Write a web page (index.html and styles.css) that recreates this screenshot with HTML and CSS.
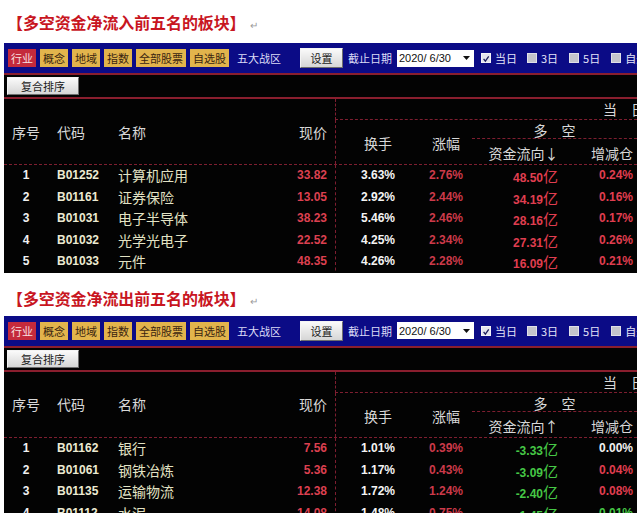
FILE: index.html
```html
<!DOCTYPE html>
<html lang="zh-CN">
<head>
<meta charset="utf-8">
<title>多空资金净流向板块</title>
<link rel="stylesheet" href="styles.css">
</head>
<body>
<section class="block block-in">
  <h2 class="title">【多空资金净流入前五名的板块】<span class="ret">↵</span></h2>
  <div class="panel">
    <div class="toolbar">
      <span class="tab tab-active">行业</span>
      <span class="tab">概念</span>
      <span class="tab">地域</span>
      <span class="tab">指数</span>
      <span class="tab">全部股票</span>
      <span class="tab">自选股</span>
      <span class="zone">五大战区</span>
      <span class="btn btn-set">设置</span>
      <span class="label">截止日期</span>
      <span class="select"><span class="sel-text">2020/ 6/30</span><svg class="sel-arrow" width="7" height="4" viewBox="0 0 7 4"><path d="M0 0H7L3.5 4Z" fill="#111"/></svg></span>
      <span class="chk chk-1"><span class="box box-on"><svg width="10" height="10" viewBox="0 0 10 10"><path d="M2 4.8L4.2 7.6L8.4 1.6" fill="none" stroke="#1c1c5c" stroke-width="1.6"/></svg></span>当日</span>
      <span class="chk chk-2"><span class="box"></span>3日</span>
      <span class="chk chk-3"><span class="box"></span>5日</span>
      <span class="chk chk-4"><span class="box"></span>自选</span>
    </div>
    <div class="sortbar"><span class="btn btn-sort">复合排序</span></div>
    <div class="cols head">
      <span class="h-no">序号</span>
      <span class="h-code">代码</span>
      <span class="h-name">名称</span>
      <span class="h-price">现价</span>
      <span class="h-cur">当　日</span>
      <span class="h-turn">换手</span>
      <span class="h-chg">涨幅</span>
      <span class="h-ls">多　空</span>
      <span class="h-flow">资金流向↓</span>
      <span class="h-pos">增减仓</span>
    </div>
    <div class="rows">
      <div class="cols row"><span class="c-no">1</span><span class="c-code">B01252</span><span class="c-name">计算机应用</span><span class="c-price">33.82</span><span class="c-turn">3.63%</span><span class="c-chg">2.76%</span><span class="c-flow up">48.50<span class="yi">亿</span></span><span class="c-pos up">0.24%</span></div>
      <div class="cols row"><span class="c-no">2</span><span class="c-code">B01161</span><span class="c-name">证券保险</span><span class="c-price">13.05</span><span class="c-turn">2.92%</span><span class="c-chg">2.44%</span><span class="c-flow up">34.19<span class="yi">亿</span></span><span class="c-pos up">0.16%</span></div>
      <div class="cols row"><span class="c-no">3</span><span class="c-code">B01031</span><span class="c-name">电子半导体</span><span class="c-price">38.23</span><span class="c-turn">5.46%</span><span class="c-chg">2.46%</span><span class="c-flow up">28.16<span class="yi">亿</span></span><span class="c-pos up">0.17%</span></div>
      <div class="cols row"><span class="c-no">4</span><span class="c-code">B01032</span><span class="c-name">光学光电子</span><span class="c-price">22.52</span><span class="c-turn">4.25%</span><span class="c-chg">2.34%</span><span class="c-flow up">27.31<span class="yi">亿</span></span><span class="c-pos up">0.26%</span></div>
      <div class="cols row"><span class="c-no">5</span><span class="c-code">B01033</span><span class="c-name">元件</span><span class="c-price">48.35</span><span class="c-turn">4.26%</span><span class="c-chg">2.28%</span><span class="c-flow up">16.09<span class="yi">亿</span></span><span class="c-pos up">0.21%</span></div>
    </div>
  </div>
</section>

<section class="block block-out">
  <h2 class="title">【多空资金净流出前五名的板块】<span class="ret">↵</span></h2>
  <div class="panel">
    <div class="toolbar">
      <span class="tab tab-active">行业</span>
      <span class="tab">概念</span>
      <span class="tab">地域</span>
      <span class="tab">指数</span>
      <span class="tab">全部股票</span>
      <span class="tab">自选股</span>
      <span class="zone">五大战区</span>
      <span class="btn btn-set">设置</span>
      <span class="label">截止日期</span>
      <span class="select"><span class="sel-text">2020/ 6/30</span><svg class="sel-arrow" width="7" height="4" viewBox="0 0 7 4"><path d="M0 0H7L3.5 4Z" fill="#111"/></svg></span>
      <span class="chk chk-1"><span class="box box-on"><svg width="10" height="10" viewBox="0 0 10 10"><path d="M2 4.8L4.2 7.6L8.4 1.6" fill="none" stroke="#1c1c5c" stroke-width="1.6"/></svg></span>当日</span>
      <span class="chk chk-2"><span class="box"></span>3日</span>
      <span class="chk chk-3"><span class="box"></span>5日</span>
      <span class="chk chk-4"><span class="box"></span>自选</span>
    </div>
    <div class="sortbar"><span class="btn btn-sort">复合排序</span></div>
    <div class="cols head">
      <span class="h-no">序号</span>
      <span class="h-code">代码</span>
      <span class="h-name">名称</span>
      <span class="h-price">现价</span>
      <span class="h-cur">当　日</span>
      <span class="h-turn">换手</span>
      <span class="h-chg">涨幅</span>
      <span class="h-ls">多　空</span>
      <span class="h-flow">资金流向↑</span>
      <span class="h-pos">增减仓</span>
    </div>
    <div class="rows">
      <div class="cols row"><span class="c-no">1</span><span class="c-code">B01162</span><span class="c-name">银行</span><span class="c-price">7.56</span><span class="c-turn">1.01%</span><span class="c-chg">0.39%</span><span class="c-flow down">-3.33<span class="yi">亿</span></span><span class="c-pos flat">0.00%</span></div>
      <div class="cols row"><span class="c-no">2</span><span class="c-code">B01061</span><span class="c-name">钢铁冶炼</span><span class="c-price">5.36</span><span class="c-turn">1.17%</span><span class="c-chg">0.43%</span><span class="c-flow down">-3.09<span class="yi">亿</span></span><span class="c-pos up">0.04%</span></div>
      <div class="cols row"><span class="c-no">3</span><span class="c-code">B01135</span><span class="c-name">运输物流</span><span class="c-price">12.38</span><span class="c-turn">1.72%</span><span class="c-chg">1.24%</span><span class="c-flow down">-2.40<span class="yi">亿</span></span><span class="c-pos up">0.08%</span></div>
      <div class="cols row"><span class="c-no">4</span><span class="c-code">B01112</span><span class="c-name">水泥</span><span class="c-price">14.08</span><span class="c-turn">1.48%</span><span class="c-chg">0.75%</span><span class="c-flow down">-1.45<span class="yi">亿</span></span><span class="c-pos down">0.01%</span></div>
    </div>
  </div>
</section>
</body>
</html>
```

FILE: styles.css
```css
html, body {
  margin: 0;
  padding: 0;
  background: #ffffff;
}

body {
  width: 640px;
  height: 513px;
  overflow: hidden;
  font-family: "Noto Sans CJK SC", "Liberation Sans", sans-serif;
}

.block {
  display: flex;
  flex-direction: column;
}

.title {
  margin: 0;
  height: 43px;
  box-sizing: border-box;
  padding: 12px 0 0 7px;
  font-size: 16px;
  line-height: 20px;
  font-weight: 700;
  letter-spacing: -0.1px;
  color: #c8161f;
  white-space: nowrap;
}

.block-out .title {
  padding-top: 15px;
}

.ret {
  margin-left: 4px;
  font-size: 10px;
  font-weight: 400;
  color: #9a9a9a;
  letter-spacing: 0;
}

.panel {
  margin-left: 4px;
  width: 633px;
  background: #030303;
  overflow: hidden;
}

/* toolbar */
.toolbar {
  height: 30px;
  box-sizing: border-box;
  padding-left: 4px;
  background: #0b0b86;
  display: flex;
  align-items: center;
  gap: 4px;
  font-size: 11px;
  white-space: nowrap;
}

.toolbar > * {
  flex-shrink: 0;
}

.tab {
  height: 18px;
  line-height: 18px;
  padding: 0 3px;
  background: #e2b44c;
  color: #3a2410;
}

.tab-active {
  background: #c42a3c;
  color: #f8e0e0;
}

.zone {
  margin-left: 4px;
  color: #dcdcf6;
}

.btn {
  box-sizing: border-box;
  text-align: center;
  color: #1a1a1a;
  background: linear-gradient(#fafafa, #d6d6d6);
  border: 1px solid;
  border-color: #f4f4f4 #6e6e6e #6e6e6e #f4f4f4;
}

.btn-set {
  width: 43px;
  height: 20px;
  line-height: 18px;
  margin-left: 15px;
}

.label {
  margin-left: 1px;
  color: #dcdcf6;
}

.select {
  margin-left: 1px;
  width: 77px;
  height: 17px;
  background: #ffffff;
  display: flex;
  align-items: center;
  padding: 0 4px 0 2px;
  box-sizing: border-box;
}

.sel-text {
  font-family: "Liberation Sans", sans-serif;
  font-size: 11px;
  color: #111111;
  white-space: pre;
}

.sel-arrow {
  margin-left: auto;
}

.chk {
  display: flex;
  align-items: center;
  gap: 4px;
  color: #e4e4f8;
}

.chk-1 { margin-left: 3px; }
.chk-2 { margin-left: 6px; }
.chk-3 { margin-left: 7px; }
.chk-4 { margin-left: 7px; }

.box {
  width: 10px;
  height: 10px;
  box-sizing: border-box;
  background: #c4c4cc;
  border: 1px solid #e0e0e8;
  display: flex;
}

.box-on {
  background: #e4e4ec;
  border-color: #f4f4f8;
}

/* sort bar */
.sortbar {
  height: 26px;
  box-sizing: border-box;
  border-top: 2px solid #8a1e2e;
  border-bottom: 2px solid #8a1e2e;
  display: flex;
  align-items: center;
  padding-left: 3px;
}

.btn-sort {
  width: 72px;
  height: 18px;
  line-height: 16px;
  font-size: 11px;
}

/* table grid */
.cols {
  display: grid;
  grid-template-columns: 44px 66px 140px 81px 85px 52px 103px 62px;
}

.head {
  grid-template-rows: 21px 19px 25px;
  border-bottom: 1px dashed #7e1e30;
  color: #d8d8d8;
  font-size: 14px;
  white-space: nowrap;
}

.h-no, .h-code, .h-name, .h-price {
  grid-row: 1 / 4;
  align-self: center;
  line-height: 20px;
}

.h-no { grid-column: 1; text-align: center; }
.h-code { grid-column: 2; padding-left: 9px; }
.h-name { grid-column: 3; padding-left: 4px; }
.h-price { grid-column: 4; text-align: right; padding-right: 8px; }

.h-cur {
  grid-column: 5 / 9;
  grid-row: 1;
  border-left: 1px dashed #7e1e30;
  border-bottom: 1px dashed #7e1e30;
  line-height: 20px;
  padding-left: 267px;
}

.h-turn {
  grid-column: 5;
  grid-row: 2 / 4;
  border-left: 1px dashed #7e1e30;
  display: flex;
  align-items: center;
  justify-content: center;
  padding-top: 2px;
}

.h-chg {
  grid-column: 6;
  grid-row: 2 / 4;
  display: flex;
  align-items: center;
  justify-content: center;
  padding-top: 2px;
}

.h-ls {
  grid-column: 7 / 9;
  grid-row: 2;
  border-bottom: 1px dashed #7e1e30;
  text-align: center;
  line-height: 18px;
  padding-top: 1px;
}

.h-flow {
  grid-column: 7;
  grid-row: 3;
  text-align: center;
  line-height: 22px;
  padding-top: 3px;
}

.h-pos {
  grid-column: 8;
  grid-row: 3;
  text-align: right;
  padding-right: 4px;
  line-height: 22px;
  padding-top: 3px;
}

/* rows */
.row {
  height: 21.6px;
  font-family: "Liberation Sans", sans-serif;
  font-weight: 700;
  font-size: 12px;
  white-space: nowrap;
}

.row > span {
  line-height: 21.6px;
}

.c-no { text-align: center; color: #f0f0f0; }
.c-code { padding-left: 9px; color: #ecead2; }
.c-name {
  padding-left: 4px;
  font-family: "Noto Sans CJK SC", sans-serif;
  font-weight: 400;
  font-size: 14px;
  color: #e2e2c4;
}
.c-price { text-align: right; padding-right: 8px; color: #dc4050; }
.c-turn { border-left: 1px dashed #7e1e30; text-align: center; color: #f4f4f4; }
.c-chg { text-align: center; color: #cc3a4a; }
.c-flow { text-align: right; padding-right: 17px; }
.c-pos { text-align: right; padding-right: 4px; }

.up { color: #e03e50; }
.down { color: #46c846; }
.flat { color: #f0f0f0; }

.yi {
  font-family: "Noto Sans CJK SC", sans-serif;
  font-weight: 400;
  font-size: 15px;
}
```
